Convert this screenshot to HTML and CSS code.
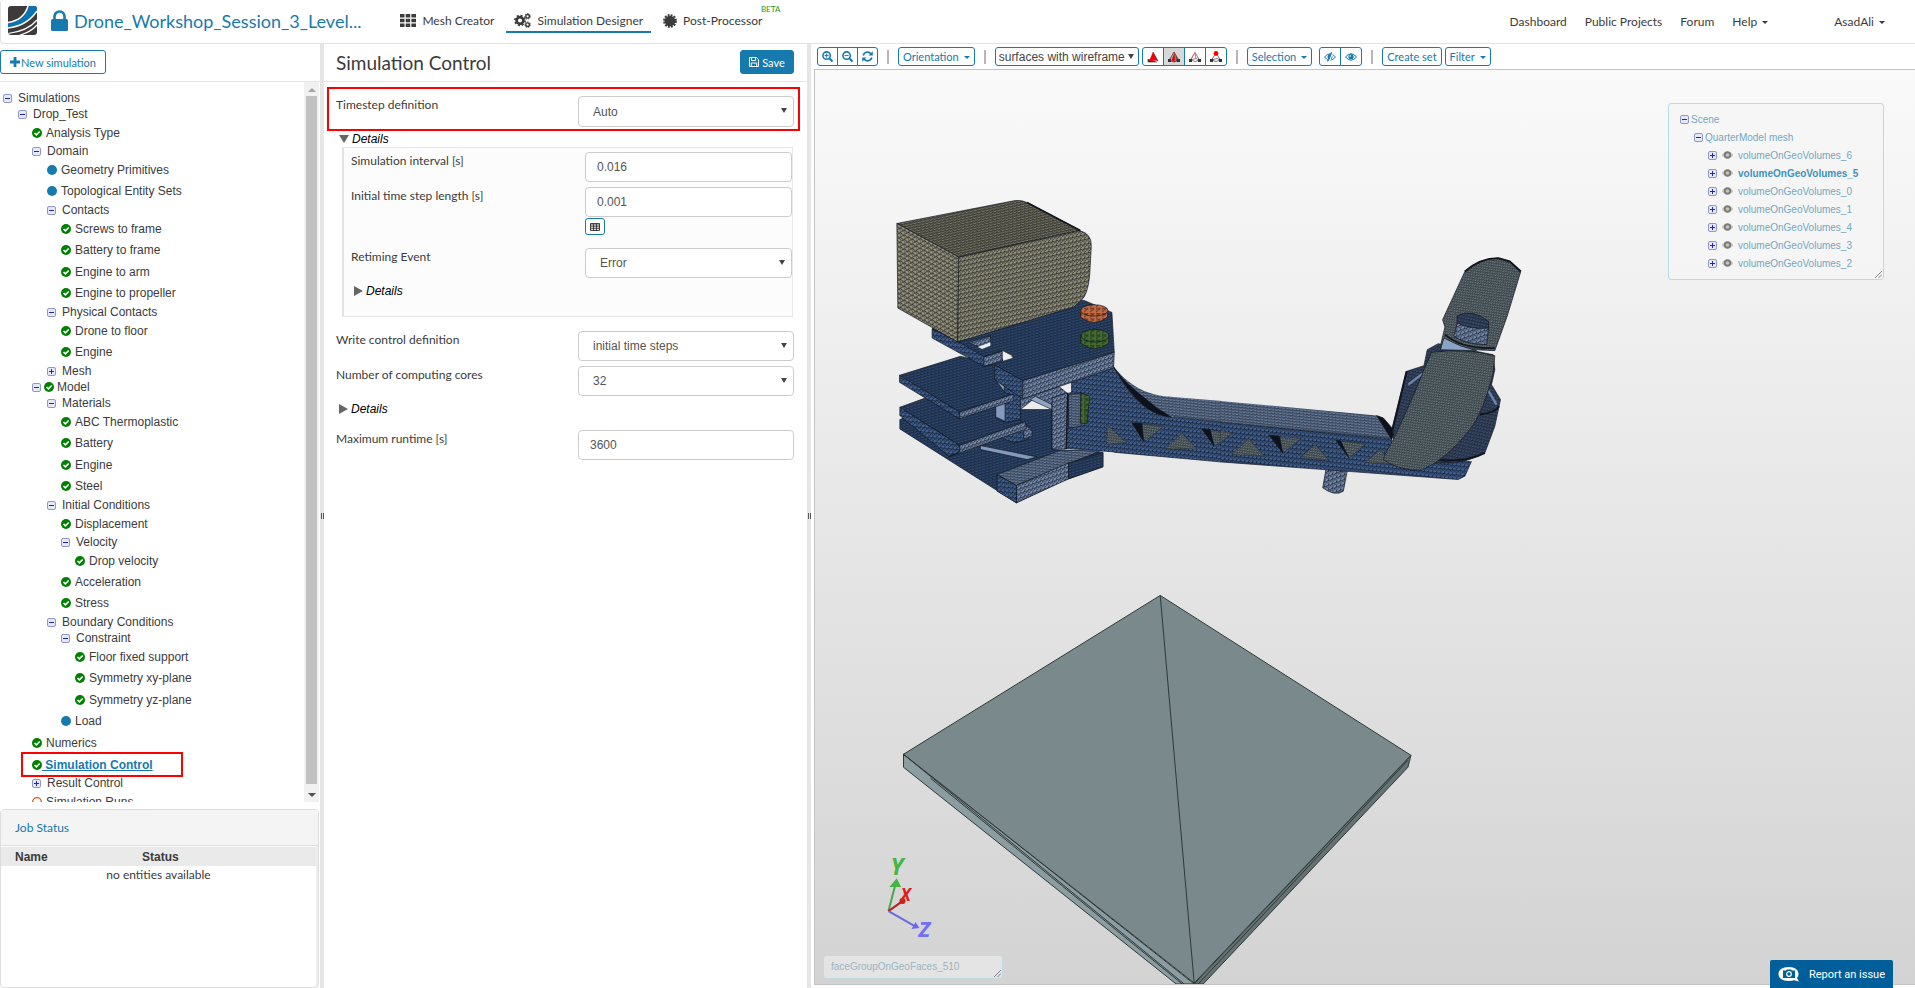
FILE: index.html
```html
<!DOCTYPE html>
<html lang="en">
<head>
    <meta charset="UTF-8">
    <meta name="viewport" content="width=device-width, initial-scale=1.0">
    <title>Simulation Designer</title>
    <link rel="stylesheet" href="styles.css">
</head>
<body>
    <!-- icon sprite -->
    <svg class="sprite" aria-hidden="true">
        <symbol id="check" viewBox="0 0 12 12"><circle cx="6" cy="6" r="6" fill="#008000"/><path d="M3 6l2.3 2.3L9.2 4.2" fill="none" stroke="#fff" stroke-width="1.9"/></symbol>
        <symbol id="dot" viewBox="0 0 12 12"><circle cx="6" cy="6" r="6" fill="#177aae"/></symbol>
        <symbol id="ring" viewBox="0 0 12 12"><circle cx="6" cy="6" r="5.2" fill="none" stroke="#e2571e" stroke-width="1.6"/></symbol>
        <symbol id="lock" viewBox="0 0 17 21"><path d="M3.500 9.500V6.500a5 5 0 0 1 10 0v3" fill="none" stroke="currentColor" stroke-width="2.600"/><rect y="9" width="17" height="12" rx="1.500" fill="currentColor"/></symbol>
        <symbol id="grid" viewBox="0 0 16 13"><path d="M0 0h4.500v3.500H0zM5.700 0h4.500v3.500H5.700zM11.400 0H16v3.500h-4.600zM0 4.700h4.500v3.500H0zM5.700 4.700h4.500v3.500H5.700zM11.400 4.700H16v3.500h-4.600zM0 9.400h4.500v3.500H0zM5.700 9.400h4.500v3.500H5.700zM11.400 9.400H16v3.500h-4.600z" fill="currentColor"/></symbol>
        <symbol id="cogs" viewBox="0 0 17 15">
            <g fill="none" stroke="currentColor">
                <circle cx="6" cy="7.500" r="3.400" stroke-width="2.600"/>
                <circle cx="6" cy="7.500" r="5.100" stroke-width="1.600" stroke-dasharray="2 2"/>
                <circle cx="13.600" cy="3.300" r="1.800" stroke-width="1.400"/>
                <circle cx="13.600" cy="3.300" r="2.800" stroke-width="1" stroke-dasharray="1.200 1.310"/>
                <circle cx="13.600" cy="11.700" r="1.800" stroke-width="1.400"/>
                <circle cx="13.600" cy="11.700" r="2.800" stroke-width="1" stroke-dasharray="1.200 1.310"/>
            </g>
        </symbol>
        <symbol id="badge" viewBox="0 0 14 14"><circle cx="7" cy="7" r="5.300" fill="currentColor"/><circle cx="7" cy="7" r="5.900" fill="none" stroke="currentColor" stroke-width="2" stroke-dasharray="1.900 1.190"/></symbol>
        <symbol id="plus" viewBox="0 0 10 10"><path d="M5 0v10M0 5h10" stroke="currentColor" stroke-width="2.800"/></symbol>
        <symbol id="save" viewBox="0 0 10 10"><path d="M.5.5h6.800l2.200 2.200v6.800h-9zM2.500.5v3h4v-3M2.300 9.500v-3.500h5.400v3.500" fill="none" stroke="currentColor"/></symbol>
        <symbol id="zoom-in" viewBox="0 0 11 11"><path d="M7.500 7.500l3 3" stroke="currentColor" stroke-width="2"/><circle cx="4.600" cy="4.600" r="3.700" fill="none" stroke="currentColor" stroke-width="1.600"/><path d="M2.600 4.600h4M4.600 2.600v4" stroke="currentColor"/></symbol>
        <symbol id="zoom-out" viewBox="0 0 11 11"><path d="M7.500 7.500l3 3" stroke="currentColor" stroke-width="2"/><circle cx="4.600" cy="4.600" r="3.700" fill="none" stroke="currentColor" stroke-width="1.600"/><path d="M2.600 4.600h4" stroke="currentColor"/></symbol>
        <symbol id="refresh" viewBox="0 0 11 11"><path d="M1.200 4.500A4.400 4.400 0 0 1 9 3M9.800 6.500A4.400 4.400 0 0 1 2 8" fill="none" stroke="currentColor" stroke-width="1.700"/><path d="M10.800.3v4.200H6.600zM.2 10.700V6.500h4.200z" fill="currentColor"/></symbol>
        <symbol id="eye" viewBox="0 0 12 8"><path d="M.5 4Q6-2.500 11.500 4 6 10.500.5 4z" fill="none" stroke="currentColor"/><circle cx="6" cy="3.700" r="2.600" fill="currentColor"/><circle cx="5.200" cy="3" r=".8" fill="#fff"/></symbol>
        <symbol id="eye-off" viewBox="0 0 12 10"><path d="M.5 5Q6-1.500 11.500 5 6 11.500.5 5z" fill="none" stroke="currentColor"/><circle cx="6" cy="4.700" r="2.500" fill="currentColor"/><path d="M5 10.500L9-.5" stroke="#fff" stroke-width="1.200"/><path d="M3.500 9.500L7.700.3" stroke="currentColor" stroke-width="1.200"/></symbol>
        <symbol id="gray-eye" viewBox="0 0 12 8"><ellipse cx="6" cy="4" rx="6" ry="3.200" fill="#c3c3bf"/><circle cx="6" cy="4" r="3" fill="none" stroke="#7d7d75" stroke-width="2"/></symbol>
        <symbol id="table" viewBox="0 0 10 8"><path d="M.5.5h9v7h-9zM0 2h10M0 3.800h10M0 5.700h10M3.500 1v7M6.500 1v7" fill="none" stroke="currentColor" stroke-width=".9"/></symbol>
        <symbol id="tet-solid" viewBox="0 0 12 12"><path d="M6 1l5 9-3-2zM1 8v3h9" fill="#333" stroke="#333" stroke-width=".6"/><path d="M6 1L10 9.500 2 10z" fill="#f00"/></symbol>
        <symbol id="tet-half" viewBox="0 0 12 12"><path d="M6 1L11 9.500 6 11 1 9.500z" fill="#aaa" stroke="#444" stroke-width=".8"/><path d="M6.800 1v10L3.500 9.500z" fill="#e00"/><path d="M7.500 3l3 7H7.500z" fill="#555"/><path d="M0 8h3v3H0zM9 8h3v3H9z" fill="#333"/></symbol>
        <symbol id="tet-edge" viewBox="0 0 12 12"><path d="M6 1.500L10.500 9 6 10.500 1.500 9zM1.500 9L7 7.500 10.500 9" fill="#fff" stroke="#888"/><path d="M6 1.500L1.500 9M6 1.500L7 7.500" stroke="#e66"/><path d="M0 8h3v3H0zM9 8h3v3H9z" fill="#333"/></symbol>
        <symbol id="tet-node" viewBox="0 0 12 12"><path d="M6 2L10.500 9 6 10.500 1.500 9zM1.500 9L7 7.500 10.500 9" fill="#fff" stroke="#777"/><path d="M0 8h3v3H0zM9 8h3v3H9z" fill="#333"/><circle cx="6" cy="2.500" r="2.400" fill="#f00"/></symbol>
    </svg>

    <header class="topbar">
        <a class="logo" href="#" aria-label="Home">
            <svg width="29" height="29" viewBox="0 0 29 29">
                <defs><clipPath id="logoClip"><rect width="29" height="29" rx="3"/></clipPath></defs>
                <g clip-path="url(#logoClip)">
                    <rect width="29" height="29" fill="#3e3a39"/>
                    <path d="M0 17Q17 15 20.500 0H29v4Q19 20 0 22z" fill="#0b73b0"/>
                    <path d="M0 16.500Q16 14 20 0M0 22Q19 20 29 5" fill="none" stroke="#fff" stroke-width="1.500"/>
                    <path d="M0 27.500Q20 25 29 14M11 29.500Q23 26 29 19" fill="none" stroke="#fff" stroke-width="1.200"/>
                </g>
            </svg>
        </a>
        <a class="project" href="#"><svg width="17" height="21"><use href="#lock"/></svg>Drone_Workshop_Session_3_Level...</a>
        <nav class="modes">
            <a href="#"><svg width="16" height="13"><use href="#grid"/></svg>Mesh Creator</a>
            <a class="active" href="#"><svg width="17" height="15"><use href="#cogs"/></svg>Simulation Designer</a>
            <a href="#"><svg width="14" height="14"><use href="#badge"/></svg>Post-Processor<sup>BETA</sup></a>
        </nav>
        <nav class="links">
            <a href="#">Dashboard</a>
            <a href="#">Public Projects</a>
            <a href="#">Forum</a>
            <a class="caret" href="#">Help</a>
            <a class="caret user" href="#">AsadAli</a>
        </nav>
    </header>

    <main class="workspace">
        <aside class="sidebar">
            <div class="panel-head side-head">
                <button class="btn new-sim"><svg width="10" height="10"><use href="#plus"/></svg>New simulation</button>
            </div>
            <div class="tree-wrap">
                <ul class="tree">
                    <li><div class="row"><button class="toggle minus" aria-label="Collapse"></button>Simulations</div>
                        <ul>
                            <li><div class="row"><button class="toggle minus" aria-label="Collapse"></button>Drop_Test</div>
                                <ul>
                                    <li class="leaf"><svg><use href="#check"/></svg>Analysis Type</li>
                                    <li><div class="row"><button class="toggle minus" aria-label="Collapse"></button>Domain</div>
                                        <ul>
                                            <li class="leaf"><svg><use href="#dot"/></svg>Geometry Primitives</li>
                                            <li class="leaf"><svg><use href="#dot"/></svg>Topological Entity Sets</li>
                                            <li><div class="row"><button class="toggle minus" aria-label="Collapse"></button>Contacts</div>
                                                <ul>
                                                    <li class="leaf"><svg><use href="#check"/></svg>Screws to frame</li>
                                                    <li class="leaf"><svg><use href="#check"/></svg>Battery to frame</li>
                                                    <li class="leaf"><svg><use href="#check"/></svg>Engine to arm</li>
                                                    <li class="leaf"><svg><use href="#check"/></svg>Engine to propeller</li>
                                                </ul>
                                            </li>
                                            <li><div class="row"><button class="toggle minus" aria-label="Collapse"></button>Physical Contacts</div>
                                                <ul>
                                                    <li class="leaf"><svg><use href="#check"/></svg>Drone to floor</li>
                                                    <li class="leaf"><svg><use href="#check"/></svg>Engine</li>
                                                </ul>
                                            </li>
                                            <li><div class="row"><button class="toggle" aria-label="Expand"></button>Mesh</div></li>
                                        </ul>
                                    </li>
                                    <li><div class="row both"><button class="toggle minus" aria-label="Collapse"></button><svg><use href="#check"/></svg>Model</div>
                                        <ul>
                                            <li><div class="row"><button class="toggle minus" aria-label="Collapse"></button>Materials</div>
                                                <ul>
                                                    <li class="leaf"><svg><use href="#check"/></svg>ABC Thermoplastic</li>
                                                    <li class="leaf"><svg><use href="#check"/></svg>Battery</li>
                                                    <li class="leaf"><svg><use href="#check"/></svg>Engine</li>
                                                    <li class="leaf"><svg><use href="#check"/></svg>Steel</li>
                                                </ul>
                                            </li>
                                            <li><div class="row"><button class="toggle minus" aria-label="Collapse"></button>Initial Conditions</div>
                                                <ul>
                                                    <li class="leaf"><svg><use href="#check"/></svg>Displacement</li>
                                                    <li><div class="row"><button class="toggle minus" aria-label="Collapse"></button>Velocity</div>
                                                        <ul>
                                                            <li class="leaf"><svg><use href="#check"/></svg>Drop velocity</li>
                                                        </ul>
                                                    </li>
                                                    <li class="leaf"><svg><use href="#check"/></svg>Acceleration</li>
                                                    <li class="leaf"><svg><use href="#check"/></svg>Stress</li>
                                                </ul>
                                            </li>
                                            <li><div class="row"><button class="toggle minus" aria-label="Collapse"></button>Boundary Conditions</div>
                                                <ul>
                                                    <li><div class="row"><button class="toggle minus" aria-label="Collapse"></button>Constraint</div>
                                                        <ul>
                                                            <li class="leaf"><svg><use href="#check"/></svg>Floor fixed support</li>
                                                            <li class="leaf"><svg><use href="#check"/></svg>Symmetry xy-plane</li>
                                                            <li class="leaf"><svg><use href="#check"/></svg>Symmetry yz-plane</li>
                                                        </ul>
                                                    </li>
                                                    <li class="leaf"><svg><use href="#dot"/></svg>Load</li>
                                                </ul>
                                            </li>
                                        </ul>
                                    </li>
                                    <li class="leaf"><svg><use href="#check"/></svg>Numerics</li>
                                    <li class="leaf selected"><svg><use href="#check"/></svg><a href="#">&nbsp;Simulation Control</a></li>
                                    <li><div class="row"><button class="toggle" aria-label="Expand"></button>Result Control</div></li>
                                    <li class="leaf"><svg><use href="#ring"/></svg>Simulation Runs</li>
                                </ul>
                            </li>
                        </ul>
                    </li>
                </ul>
                <div class="scrollbar"><i class="up"></i><span class="thumb"></span><i class="down"></i></div>
            </div>
            <section class="jobs">
                <h2>Job Status</h2>
                <table>
                    <thead><tr><th class="name">Name</th><th>Status</th></tr></thead>
                    <tbody><tr><td colspan="2">no entities available</td></tr></tbody>
                </table>
            </section>
        </aside>

        <div class="splitter"></div>

        <section class="settings">
            <div class="panel-head">
                <h1>Simulation Control</h1>
                <button class="btn save"><svg width="10" height="10"><use href="#save"/></svg>Save</button>
            </div>
            <form class="form">
                <div class="field marked">
                    <label for="timestep">Timestep definition</label>
                    <div class="control select"><select id="timestep"><option>Auto</option></select></div>
                </div>
                <button type="button" class="details open">Details</button>
                <div class="subform">
                    <div class="field">
                        <label for="interval">Simulation interval [s]</label>
                        <div class="control"><input id="interval" type="text" value="0.016"></div>
                    </div>
                    <div class="field">
                        <label for="step">Initial time step length [s]</label>
                        <div class="control"><input id="step" type="text" value="0.001"><button type="button" class="btn table-btn" aria-label="Table input"><svg width="10" height="8"><use href="#table"/></svg></button></div>
                    </div>
                    <div class="field">
                        <label for="retiming">Retiming Event</label>
                        <div class="control select"><select id="retiming"><option>Error</option></select></div>
                    </div>
                    <button type="button" class="details">Details</button>
                </div>
                <div class="field">
                    <label for="write">Write control definition</label>
                    <div class="control select"><select id="write"><option>initial time steps</option></select></div>
                </div>
                <div class="field">
                    <label for="cores">Number of computing cores</label>
                    <div class="control select"><select id="cores"><option>32</option></select></div>
                </div>
                <button type="button" class="details last">Details</button>
                <div class="field">
                    <label for="runtime">Maximum runtime [s]</label>
                    <div class="control"><input id="runtime" type="text" value="3600"></div>
                </div>
            </form>
        </section>

        <div class="splitter"></div>

        <section class="viewer">
            <div class="toolbar">
                <div class="group">
                    <button class="btn" aria-label="Zoom in"><svg width="11" height="11"><use href="#zoom-in"/></svg></button>
                    <button class="btn" aria-label="Zoom out"><svg width="11" height="11"><use href="#zoom-out"/></svg></button>
                    <button class="btn" aria-label="Reset view"><svg width="11" height="11"><use href="#refresh"/></svg></button>
                </div>
                <span class="sep"></span>
                <button class="btn caret">Orientation</button>
                <span class="sep"></span>
                <div class="select render"><select aria-label="Render mode"><option>surfaces with wireframe</option></select></div>
                <div class="group picks">
                    <button class="btn" aria-label="Pick volumes"><svg width="12" height="12"><use href="#tet-solid"/></svg></button>
                    <button class="btn pressed" aria-label="Pick faces"><svg width="12" height="12"><use href="#tet-half"/></svg></button>
                    <button class="btn" aria-label="Pick edges"><svg width="12" height="12"><use href="#tet-edge"/></svg></button>
                    <button class="btn" aria-label="Pick nodes"><svg width="12" height="12"><use href="#tet-node"/></svg></button>
                </div>
                <span class="sep"></span>
                <button class="btn caret">Selection</button>
                <div class="group eyes">
                    <button class="btn" aria-label="Hide"><svg width="12" height="10"><use href="#eye-off"/></svg></button>
                    <button class="btn" aria-label="Show"><svg width="12" height="8"><use href="#eye"/></svg></button>
                </div>
                <span class="sep"></span>
                <button class="btn">Create set</button>
                <button class="btn caret filter">Filter</button>
            </div>
            <div class="canvas">
                <svg class="scene" viewBox="815 70 1100 915" preserveAspectRatio="xMidYMid meet">
                    <defs>
                        <path id="tri" d="M0 0H12M0 0V14M0 14L12 0M0 0L12 7" fill="none" stroke="#0b0f16" stroke-width="1.500"/>
                        <pattern id="olive" width="12" height="14" patternUnits="userSpaceOnUse" patternTransform="skewY(-12)"><rect width="12" height="14" fill="#918d77"/><use href="#tri"/></pattern>
                        <pattern id="oliveLeft" width="12" height="14" patternUnits="userSpaceOnUse" patternTransform="skewY(28)"><rect width="12" height="14" fill="#98937c"/><use href="#tri"/></pattern>
                        <pattern id="oliveTop" width="12" height="14" patternUnits="userSpaceOnUse" patternTransform="skewY(-12) scale(1 .55)"><rect width="12" height="14" fill="#7c7866"/><use href="#tri"/></pattern>
                        <pattern id="navy" width="12" height="14" patternUnits="userSpaceOnUse" patternTransform="skewY(-14) scale(.9 .6)"><rect width="12" height="14" fill="#304c76"/><use href="#tri"/></pattern>
                        <pattern id="blue" width="12" height="14" patternUnits="userSpaceOnUse" patternTransform="skewY(6)"><rect width="12" height="14" fill="#405f91"/><use href="#tri"/></pattern>
                        <pattern id="light" width="12" height="14" patternUnits="userSpaceOnUse" patternTransform="skewY(-20)"><rect width="12" height="14" fill="#7389ae"/><use href="#tri"/></pattern>
                        <pattern id="armTop" width="12" height="14" patternUnits="userSpaceOnUse" patternTransform="skewY(6) scale(.9 .6)"><rect width="12" height="14" fill="#6c82a3"/><use href="#tri"/></pattern>
                        <pattern id="slate" width="12" height="14" patternUnits="userSpaceOnUse" patternTransform="rotate(8) scale(.6 .55)"><rect width="12" height="14" fill="#6e7c80"/><use href="#tri"/><path d="M6 0V14" stroke="#0b0f16"/></pattern>
                        <pattern id="motor" width="12" height="14" patternUnits="userSpaceOnUse" patternTransform="rotate(12) scale(.7)"><rect width="12" height="14" fill="#3b4c6b"/><use href="#tri"/></pattern>
                        <pattern id="rust" width="18" height="16" patternUnits="userSpaceOnUse"><rect width="18" height="16" fill="#c9693f"/><use href="#tri"/></pattern>
                        <pattern id="green" width="18" height="16" patternUnits="userSpaceOnUse"><rect width="18" height="16" fill="#426b2e"/><use href="#tri"/></pattern>
                    </defs>

                    <!-- drone frame -->
                    <g transform="translate(880 180) scale(.3333)" stroke="#10151f" stroke-width="2" stroke-linejoin="round">
                        <!-- lower plates -->
                        <path d="M58 720L130 690 515 690V810L668 818V862L545 905 408 970 58 748z" fill="url(#navy)"/>
                        <path d="M300 798L470 832 440 840 300 810z" fill="#8399bd"/>
                        <path d="M350 885L540 812H665L408 918z" fill="url(#armTop)"/>
                        <path d="M408 918L565 850V898L408 970z" fill="url(#light)"/>
                        <path d="M565 850L668 820V862L565 898z" fill="url(#navy)"/>
                        <path d="M350 885L408 918V970L350 935z" fill="url(#blue)"/>
                        <path d="M340 765L440 735Q465 755 440 780L400 790z" fill="url(#blue)"/>
                        <path d="M428 740Q460 740 455 770L430 778z" fill="url(#light)"/>
                        <path d="M58 683L130 657 345 640 430 735 237 797z" fill="url(#navy)"/>
                        <path d="M58 683L237 797V818L205 830 58 708z" fill="url(#blue)"/>
                        <path d="M237 797L435 726 438 748 205 832 237 818z" fill="url(#light)"/>
                        <path d="M345 560H420V720L375 728 345 715z" fill="url(#blue)"/>
                        <path d="M346 592L372 600V635L346 625zM346 670L374 660V725L346 712z" fill="#8399bd"/>
                        <path d="M57 587L240 530 343 556 345 600 375 640 400 645 237 697z" fill="url(#navy)"/>
                        <path d="M57 587L237 697V718L57 608z" fill="url(#blue)"/>
                        <path d="M237 697L400 643V663L237 718z" fill="url(#light)"/>
                        <path d="M420 655L535 620 560 640 515 690 470 650 420 690z" fill="url(#light)"/>
                        <path d="M465 650L515 675V690L450 660z" fill="#8fa3c2"/>
                        <path d="M515 655L562 640 558 808 515 810z" fill="url(#light)"/>
                        <path d="M537 620L572 607V637z" fill="#ededed" stroke="none"/>

                        <!-- bracket and start of the arm -->
                        <g stroke="none">
                            <path d="M572 600L700 560C745 640 790 700 880 712L1025 727V847L700 818 558 808 562 640 572 637z" fill="url(#blue)"/>
                            <path d="M700 560C770 650 850 650 880 652L1025 664V728L880 712C800 690 750 640 700 560z" fill="url(#armTop)"/>
                        </g>
                        <path d="M700 562C740 620 790 650 830 685L875 713C800 705 750 650 700 562z" fill="#0d121c"/>
                        <path d="M565 645L602 640V740L565 745z" fill="url(#armTop)"/>
                        <path d="M602 640L628 650 620 733 600 730z" fill="url(#green)"/>
                        <path d="M680 735L740 790 680 795zM765 730L850 740 795 785zM905 760L950 808H855zM975 748L1055 762 1005 800z" fill="url(#slate)" stroke-width="1"/>
                        <path d="M755 730L785 732 790 785zM965 748L990 750 1002 800z" fill="#0d121c"/>
                        <path d="M562 640L558 808" stroke-width="4"/>

                        <!-- upper plate -->
                        <path d="M155 447L365 510V548L310 560 155 475z" fill="url(#blue)"/>
                        <path d="M155 447L600 362H612L695 398 702 518 428 603 343 556V545L400 530 365 512 310 530 235 487z" fill="url(#navy)"/>
                        <path d="M368 518L398 534 368 543z" fill="#ededed" stroke="none"/>
                        <path d="M265 488L330 468V492L300 505z" fill="url(#light)"/>
                        <path d="M292 502L330 488V498L305 508z" fill="#ededed" stroke="none"/>
                        <path d="M310 532L365 515V545L310 560z" fill="url(#light)"/>
                        <path d="M343 556L428 603 427 658 343 600z" fill="url(#blue)"/>
                        <path d="M428 603L702 518 700 565 427 658z" fill="url(#light)"/>

                        <!-- battery -->
                        <path d="M49 131L405 62Q425 60 440 68L600 152 235 232z" fill="url(#oliveTop)"/>
                        <path d="M49 131L235 232 232 487 52 385z" fill="url(#oliveLeft)"/>
                        <path d="M235 232L595 152Q635 160 633 200L628 290Q622 345 603 362L580 382 232 487z" fill="url(#olive)"/>
                        <path d="M440 68L600 152" stroke-width="5"/>

                        <!-- screws -->
                        <path d="M601 392V412Q640 445 682 412V392z" fill="url(#rust)"/>
                        <ellipse cx="642" cy="392" rx="41" ry="17" fill="url(#rust)"/>
                        <path d="M601 468V490Q644 525 686 490V468z" fill="url(#green)"/>
                        <ellipse cx="644" cy="468" rx="42" ry="19" fill="url(#green)"/>
                    </g>

                    <!-- arm end, motor and propeller -->
                    <g transform="translate(1220 240) scale(.3333)" stroke="#10151f" stroke-width="2" stroke-linejoin="round">
                        <path d="M318 688L382 693 370 755Q345 772 308 745z" fill="url(#light)"/>
                        <g stroke="none">
                            <path d="M0 547L515 597 530 640 755 665 735 710 715 720 0 667z" fill="url(#blue)"/>
                            <path d="M0 484L470 528 490 535 522 575 515 597 0 547z" fill="url(#armTop)"/>
                        </g>
                        <path d="M-140 532L0 547 515 597M-320 638L0 667 715 720 735 710 755 665" fill="none"/>
                        <path d="M470 528L490 535 525 575 515 600z" fill="#0d121c"/>
                        <path d="M0 572L38 580 0 610zM85 597L133 650 35 645zM160 589L243 597 190 640zM285 615L328 663 240 655zM355 604L438 612 388 655zM480 630L520 675 435 668z" fill="url(#slate)" stroke-width="1"/>
                        <path d="M148 587L178 590 188 640zM348 602L362 604 385 652z" fill="#0d121c"/>
                        <path d="M560 395L612 378 622 330 655 312 820 345 825 390 815 435 842 480 825 560 795 640Q700 690 620 660L520 600 518 560z" fill="url(#motor)"/>
                        <path d="M560 395L518 570M640 660Q740 670 795 640M780 525Q825 520 838 500" fill="none" stroke-width="6"/>
                        <path d="M565 435L608 402M805 452L830 495" stroke="#6f86ab" stroke-width="7"/>
                        <path d="M668 240L735 95Q780 55 835 55L870 65 903 95 862 230 825 333 660 325 675 262z" fill="url(#slate)"/>
                        <path d="M735 95Q780 55 835 55L870 65 903 95" fill="none" stroke-width="6"/>
                        <path d="M672 295Q720 322 770 333L662 330z" fill="#8ba3c4"/>
                        <path d="M675 285Q730 330 825 325" fill="none" stroke-width="5"/>
                        <path d="M712 250L806 265 800 315Q740 315 702 290z" fill="url(#light)"/>
                        <path d="M712 228Q755 205 806 245V265Q755 270 712 250z" fill="url(#motor)"/>
                        <path d="M635 338Q730 325 825 348L820 400Q790 520 750 570 680 660 605 692 540 695 490 660 495 640 520 600 590 450 610 395z" fill="url(#slate)"/>
                    </g>

                    <!-- floor plate -->
                    <g stroke="#2e3839" stroke-linejoin="round">
                        <path d="M903 755V768L1176 985H1194z" fill="#8c9da1"/>
                        <path d="M1411 756L1408 768 1203 985H1194z" fill="#647274"/>
                        <path d="M1160 596L1411 756 1194 984 903 755z" fill="#7a898b"/>
                        <path d="M1160 596L1194 984M903 755L1184 985M930 779L1182 985M1408 761L1198 985" fill="none"/>
                    </g>

                    <!-- axes -->
                    <g class="axes" fill="none" stroke-width="2">
                        <path d="M888 912L895 885" stroke="#4aa84a"/><path d="M896 881L891 887 899 887z" fill="#43b543" stroke="#43b543"/>
                        <path d="M888 912L902 902" stroke="#b52020"/><circle cx="902" cy="902" r="3" fill="#d01c1c"/>
                        <path d="M888 912L916 928" stroke="#6a6ae0"/><path d="M919 929L911 930 915 923z" fill="#6a6af0"/>
                        <text x="890" y="876" font-size="23" fill="#43b543">Y</text>
                        <text x="900" y="902" font-size="17" fill="#e01c1c">X</text>
                        <text x="918" y="938" font-size="22" fill="#7070f5">Z</text>
                    </g>
                </svg>

                <div class="overlay scene-tree">
                    <ul>
                        <li><button class="toggle minus" aria-label="Collapse"></button>Scene</li>
                        <li class="l1"><button class="toggle minus" aria-label="Collapse"></button>QuarterModel mesh</li>
                        <li class="l2"><button class="toggle" aria-label="Expand"></button><svg><use href="#gray-eye"/></svg>volumeOnGeoVolumes_6</li>
                        <li class="l2 current"><button class="toggle" aria-label="Expand"></button><svg><use href="#gray-eye"/></svg>volumeOnGeoVolumes_5</li>
                        <li class="l2"><button class="toggle" aria-label="Expand"></button><svg><use href="#gray-eye"/></svg>volumeOnGeoVolumes_0</li>
                        <li class="l2"><button class="toggle" aria-label="Expand"></button><svg><use href="#gray-eye"/></svg>volumeOnGeoVolumes_1</li>
                        <li class="l2"><button class="toggle" aria-label="Expand"></button><svg><use href="#gray-eye"/></svg>volumeOnGeoVolumes_4</li>
                        <li class="l2"><button class="toggle" aria-label="Expand"></button><svg><use href="#gray-eye"/></svg>volumeOnGeoVolumes_3</li>
                        <li class="l2"><button class="toggle" aria-label="Expand"></button><svg><use href="#gray-eye"/></svg>volumeOnGeoVolumes_2</li>
                    </ul>
                    <svg class="grip" viewBox="0 0 8 8"><path d="M0 8L8 0M4 8L8 4" stroke="#555" stroke-width=".8"/></svg>
                </div>
                <div class="overlay hover-info">faceGroupOnGeoFaces_510<svg class="grip" viewBox="0 0 8 8"><path d="M0 8L8 0M4 8L8 4" stroke="#555" stroke-width=".8"/></svg></div>
            </div>
        </section>
    </main>

    <button class="report">
        <svg width="22" height="15" viewBox="0 0 22 15"><path d="M11 0C17 0 20.500 3 20.500 7q0 2.500-1.500 4.300L21 14.500 16 13.300Q14 14 11 14C4 14 .5 11 .5 7S4 0 11 0z" fill="#fff"/><path d="M5 3.500h3l1-1h4l1 1h3v7.500H5z" fill="#005f9b"/><circle cx="11" cy="7" r="2.300" fill="none" stroke="#fff" stroke-width="1.200"/></svg>
        Report an issue
    </button>
</body>
</html>
```
FILE: styles.css
```css
*, *::before, *::after {
    box-sizing: border-box;
}
body {
    margin: 0;
    height: 100vh;
    display: flex;
    flex-direction: column;
    overflow: hidden;
    background: #fff;
    color: #3b3b3b;
    font-family: Lato, sans-serif;
    font-size: 12px;
}
ul {
    list-style: none;
    margin: 0;
    padding: 0;
}
a {
    color: inherit;
    text-decoration: none;
}
button, input, select {
    font-family: inherit;
    font-size: inherit;
    color: inherit;
    margin: 0;
}
svg {
    flex: none;
}
.sprite {
    display: none;
}

/* top bar */
.topbar {
    display: flex;
    align-items: center;
    flex: none;
    height: 44px;
    padding: 0 30px 2px 7px;
    border: 1px solid #e2e2e2;
    border-width: 0 0 1px 1px;
    border-radius: 4px 0 0 4px;
}
.logo {
    display: flex;
}
.project {
    display: flex;
    align-items: center;
    gap: 6px;
    margin-left: 14px;
    color: #177aae;
    font-size: 18px;
}
.modes {
    display: flex;
    align-items: center;
    gap: 4px;
    margin-left: 31px;
    margin-top: 2px;
}
.modes a {
    position: relative;
    display: flex;
    align-items: center;
    gap: 6px;
    height: 22px;
    padding: 0 8px;
    border-bottom: 2px solid transparent;
}
.modes .active {
    border-color: #177aae;
}
.modes sup {
    position: absolute;
    right: -10px;
    top: -7px;
    color: #1c9a1c;
    font-size: 8px;
}
.links {
    display: flex;
    gap: 18px;
    margin-left: auto;
    padding-top: 2px;
}
.links .user {
    margin-left: 48px;
}
.caret::after {
    content: "";
    display: inline-block;
    margin-left: 5px;
    border: 3px solid transparent;
    border-top-color: currentColor;
    border-bottom: 0;
    vertical-align: 2px;
}
.btn.caret::after {
    margin-top: 2px;
}

/* columns */
.workspace {
    display: flex;
    flex: 1;
    min-height: 0;
}
.splitter {
    flex: none;
    width: 4px;
    background: #e6e6e6;
    display: flex;
    align-items: center;
    justify-content: center;
}
.splitter::after {
    content: "";
    width: 3px;
    height: 6px;
    border: 1px solid #555;
    border-width: 0 1px;
}
.panel-head {
    display: flex;
    align-items: center;
    justify-content: space-between;
    flex: none;
    height: 38px;
    padding: 0 13px 1px 12px;
    border-bottom: 1px solid #e6e6e6;
}
.panel-head h1 {
    margin: 0;
    font-size: 19px;
    font-weight: normal;
}
.btn {
    display: inline-flex;
    align-items: center;
    justify-content: center;
    height: 19px;
    padding: 0 4px;
    border: 1px solid #177aae;
    border-radius: 3px;
    background: #fff;
    color: #177aae;
    font-size: 11px;
    white-space: nowrap;
}

/* sidebar */
.sidebar {
    flex: 0 0 320px;
    display: flex;
    flex-direction: column;
    min-height: 0;
}
.side-head {
    padding: 0 0 1px;
}
.new-sim {
    height: 24px;
    padding: 0 9px;
    gap: 1px;
}
.tree-wrap {
    flex: 1;
    min-height: 0;
    display: flex;
    justify-content: space-between;
    overflow: hidden;
    margin: 0 1px 7px 0;
}
.tree {
    padding: 8px 0 0 3px;
    font-family: "Liberation Sans", Arial, sans-serif;
    font-size: 12px;
}
.tree ul {
    padding-left: 15px;
}
.tree ul ul {
    padding-left: 14px;
}
.tree ul ul ul {
    padding-left: 15px;
}
.tree ul ul ul ul {
    padding-left: 14px;
}
.row, .leaf {
    display: flex;
    align-items: center;
    white-space: nowrap;
}
.row {
    height: 16px;
    gap: 6px;
}
.row.both {
    gap: 3px;
}
.leaf {
    height: 21px;
    gap: 4px;
}
.leaf:nth-child(even) {
    height: 22px;
}
.row svg, .leaf svg {
    width: 10px;
    height: 10px;
}
.toggle {
    position: relative;
    flex: none;
    width: 9px;
    height: 9px;
    padding: 0;
    border: 1px solid #8f97cc;
    border-radius: 2px;
    background: #e6e8f7;
}
.toggle::before, .toggle::after {
    content: "";
    position: absolute;
    background: #2323c0;
}
.toggle::before {
    left: 1px;
    right: 1px;
    top: 3px;
    height: 1px;
}
.toggle::after {
    top: 1px;
    bottom: 1px;
    left: 3px;
    width: 1px;
}
.toggle.minus::after {
    display: none;
}
.selected {
    position: relative;
    gap: 0;
    color: #177aae;
    font-weight: bold;
}
.selected a {
    text-decoration: underline;
}
.selected::after {
    content: "";
    position: absolute;
    left: -11px;
    top: -2px;
    width: 162px;
    height: 25px;
    border: 2px solid #f00;
}
.scrollbar {
    display: flex;
    flex-direction: column;
    align-items: center;
    width: 15px;
    padding: 6px 0 5px;
    background: #f1f1f1;
}
.thumb {
    flex: 1;
    width: 11px;
    margin: 4px 0 9px;
    background: #c1c1c1;
}
.up, .down {
    border: 4px solid transparent;
}
.up {
    border-top: 0;
    border-bottom-color: #a3a3a3;
}
.down {
    border-bottom: 0;
    border-top-color: #505050;
}
.jobs {
    flex: none;
    height: 179px;
    margin: 0 1px 0 0;
    padding: 0 2px 0 0;
    border: 1px solid #ddd;
    border-radius: 4px;
    box-shadow: inset -2px 0 0 #eee;
}
.jobs h2 {
    margin: 0 -2px 1px 0;
    padding-left: 14px;
    background: #f4f4f4;
    border-bottom: 1px solid #ddd;
    color: #177aae;
    font-size: 12px;
    font-weight: normal;
    line-height: 35px;
}
.jobs table {
    width: 100%;
    border-collapse: collapse;
}
.jobs th {
    height: 19px;
    padding: 0;
    background: #eaeaea;
    font: bold 12px "Liberation Sans", Arial, sans-serif;
    text-align: left;
}
.jobs .name {
    width: 141px;
    padding-left: 14px;
}
.jobs td {
    padding: 1px 0;
    text-align: center;
}

/* settings form */
.settings {
    flex: 0 0 483px;
}
.save {
    height: 24px;
    width: 54px;
    gap: 3px;
    background: #177aae;
    color: #fff;
}
.form {
    padding: 5px 13px 0 12px;
}
.field {
    display: flex;
    justify-content: space-between;
    margin-bottom: 5px;
}
.field label {
    line-height: 17px;
}
.marked {
    margin: 0 -6px 0 -9px;
    padding: 7px 4px 2px 7px;
    border: 2px solid #f00;
}
.control {
    width: 216px;
}
.select {
    position: relative;
}
.select::after {
    content: "";
    position: absolute;
    right: 7px;
    top: 12px;
    border: 3px solid transparent;
    border-top: 5px solid #444;
    border-bottom: 0;
    pointer-events: none;
}
.control input, .control select {
    display: block;
    appearance: none;
    width: 100%;
    height: 30px;
    padding: 0 11px;
    border: 1px solid #ccc;
    border-radius: 4px;
    background: #fff;
    color: #555;
    font-family: "Liberation Sans", Arial, sans-serif;
    font-size: 12px;
}
.control select {
    padding: 0 14px;
}
.marked select {
    height: 31px;
}
.details {
    display: flex;
    align-items: center;
    gap: 3px;
    height: 16px;
    padding: 0 0 0 3px;
    border: 0;
    background: none;
    color: #000;
    font: italic 12px "Liberation Sans", Arial, sans-serif;
}
.details::before {
    content: "";
    border: 5px solid transparent;
    border-left: 9px solid #666;
    border-right: 0;
}
.details.open::before {
    border: 5px solid transparent;
    border-top: 8px solid #666;
    border-bottom: 0;
}
.details.last {
    margin-bottom: 13px;
}
.subform {
    margin: 0 1px 14px 6px;
    padding: 4px 0 17px 7px;
    border: 1px solid #e8e8e8;
    border-left: 2px solid #e2e2e2;
    background: #fcfcfc;
}
.subform .control {
    width: 207px;
}
.table-btn {
    display: flex;
    width: 20px;
    height: 17px;
    margin: 1px 0 8px;
    color: #333;
}

/* 3d viewer */
.viewer {
    flex: 1;
    min-width: 0;
    display: flex;
    flex-direction: column;
    padding: 0 0 3px 3px;
}
.toolbar {
    display: flex;
    align-items: center;
    flex: none;
    height: 25px;
    padding: 0 3px;
}
.group {
    display: flex;
}
.group .btn {
    width: 21px;
    padding: 0;
    margin-left: -1px;
    border-radius: 0;
}
.group .btn:first-child {
    margin-left: 0;
    border-radius: 3px 0 0 3px;
}
.group .btn:last-child {
    border-radius: 0 3px 3px 0;
}
.group .pressed {
    background: #d8d8d8;
}
.picks {
    margin-left: 3px;
}
.picks .btn, .eyes .btn {
    width: 22px;
}
.eyes {
    margin-left: 7px;
}
.filter {
    margin-left: 3px;
}
.sep {
    width: 2px;
    height: 14px;
    margin: 0 9px;
    background: #bbb4b8;
}
.render select {
    display: block;
    appearance: none;
    width: 144px;
    height: 19px;
    padding: 0 3px;
    border: 1px solid #177aae;
    border-radius: 3px;
    background: #fff;
    color: #444;
    font-family: "Liberation Sans", Arial, sans-serif;
    font-size: 12px;
}
.render::after {
    top: 7px;
    right: 5px;
}
.canvas {
    position: relative;
    flex: 1;
    min-height: 0;
    border: 1px solid #c4c4c4;
    border-right: 0;
    background: linear-gradient(#fafafa, #d3d3d3);
}
.scene {
    position: absolute;
    inset: 0;
    width: 100%;
    height: 100%;
}
.axes text {
    font-family: "Open Sans", sans-serif;
    font-weight: bold;
    font-style: italic;
}
.overlay {
    position: absolute;
    border: 1px solid #b5dde8;
    border-radius: 3px;
    background: rgba(245, 245, 245, .8);
    color: #74a7c2;
    font-family: "Liberation Sans", Arial, sans-serif;
    font-size: 10px;
}
.scene-tree {
    top: 33px;
    right: 31px;
    width: 216px;
    padding: 6px 11px 7px;
}
.scene-tree li {
    display: flex;
    align-items: center;
    gap: 2px;
    height: 18px;
}
.scene-tree .l1 {
    padding-left: 14px;
}
.scene-tree .l2 {
    padding-left: 28px;
    gap: 5px;
}
.scene-tree .current {
    color: #3e93bd;
    font-weight: bold;
}
.scene-tree li svg {
    width: 11px;
    height: 8px;
}
.grip {
    position: absolute;
    right: 1px;
    bottom: 1px;
    width: 7px;
    height: 7px;
}
.hover-info {
    left: 8px;
    bottom: 5px;
    width: 180px;
    padding: 0 7px;
    border-color: #c0dbe2;
    background: rgba(235, 235, 235, .7);
    color: #9ab5c2;
    line-height: 22px;
}
.report {
    position: fixed;
    right: 22px;
    bottom: 0;
    display: flex;
    align-items: center;
    gap: 9px;
    height: 28px;
    padding: 0 8px;
    border: 0;
    border-radius: 2px 2px 0 0;
    background: #005f9b;
    color: #fff;
    font-family: Roboto, sans-serif;
    font-size: 11px;
}
```
